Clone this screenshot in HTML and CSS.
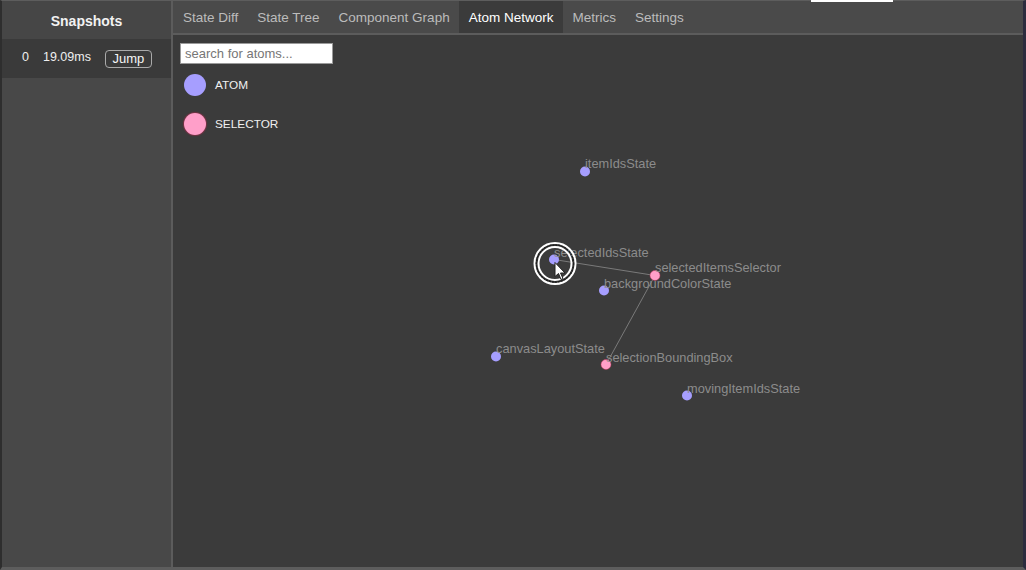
FILE: index.html
```html
<!DOCTYPE html>
<html>
<head>
<meta charset="utf-8">
<link rel="stylesheet" href="styles.css">
</head>
<body>
<div class="frame">
  <span class="top-mark"></span>
  <div class="app">
    <aside class="sidebar">
      <div class="sidebar-title">Snapshots</div>
      <div class="snapshot-row">
        <span class="snap-index">0</span>
        <span class="snap-time">19.09ms</span>
        <button class="jump">Jump</button>
      </div>
    </aside>
    <main class="main">
      <nav class="tabs">
        <div class="tab">State Diff</div>
        <div class="tab">State Tree</div>
        <div class="tab">Component Graph</div>
        <div class="tab active">Atom Network</div>
        <div class="tab">Metrics</div>
        <div class="tab">Settings</div>
      </nav>
      <section class="canvas">
        <svg class="graph" width="850" height="532" viewBox="0 0 850 532">
          <g transform="translate(-173,-34.5)">
            <line class="edge" x1="554" y1="259" x2="655" y2="275"/>
            <line class="edge" x1="655" y1="275" x2="606" y2="364"/>

            <circle class="atom" cx="585" cy="171" r="5"/>
            <text class="label" x="585" y="167.5">itemIdsState</text>

            <circle class="atom" cx="554" cy="259" r="5"/>
            <text class="label" x="554" y="256.5">selectedIdsState</text>

            <circle class="selector" cx="655" cy="275" r="5"/>
            <text class="label" x="655" y="271.5">selectedItemsSelector</text>

            <circle class="atom" cx="604" cy="290" r="5"/>
            <text class="label" x="604" y="287.5">backgroundColorState</text>

            <circle class="atom" cx="496" cy="356" r="5"/>
            <text class="label" x="496" y="352.5">canvasLayoutState</text>

            <circle class="selector" cx="606" cy="364" r="5"/>
            <text class="label" x="606" y="361.5">selectionBoundingBox</text>

            <circle class="atom" cx="687" cy="395" r="5"/>
            <text class="label" x="687" y="392.5">movingItemIdsState</text>

            <g class="pointer">
              <circle cx="555" cy="263" r="20.5" fill="none" stroke="#ffffff" stroke-width="2"/>
              <circle cx="555" cy="263" r="18.5" fill="none" stroke="#1e1e1e" stroke-width="1.5" stroke-dasharray="2 1"/>
              <circle cx="555" cy="263" r="16.5" fill="none" stroke="#ffffff" stroke-width="2"/>
              <path d="M555 262 L555 276 L558.5 273 L561 279 L563 278 L560.5 272.5 L565 272.5 Z" fill="#ffffff" stroke="#222" stroke-width="1" stroke-linejoin="round"/>
            </g>
          </g>
        </svg>
        <input class="search" type="text" placeholder="search for atoms...">
        <div class="legend">
          <div class="legend-item"><span class="dot dot-atom"></span><span class="legend-text">ATOM</span></div>
          <div class="legend-item"><span class="dot dot-selector"></span><span class="legend-text">SELECTOR</span></div>
        </div>
      </section>
    </main>
  </div>
</div>
</body>
</html>
```

FILE: styles.css
```css
* { box-sizing: border-box; }

html, body {
  margin: 0;
  padding: 0;
  background: #3b3b3b;
}

body {
  font-family: "Liberation Sans", Arial, Helvetica, sans-serif;
  width: 1026px;
  height: 570px;
  overflow: hidden;
}

.frame {
  position: relative;
  width: 1026px;
  height: 570px;
  display: flex;
  flex-direction: column;
  border-top: 1px solid #5d5d5d;
  border-left: 2px solid #2e2e2e;
  border-right: 3px solid #2c2c3e;
  border-bottom: 3px solid #5d5d5d;
}

.top-mark {
  position: absolute;
  top: -1px;
  left: 809px;
  width: 82px;
  height: 2px;
  background: #ffffff;
}

.app {
  flex: 1;
  display: flex;
  min-height: 0;
}

.sidebar {
  width: 171px;
  background: #484848;
  border-right: 2px solid #5c5c5c;
  display: flex;
  flex-direction: column;
}

.sidebar-title {
  height: 38px;
  display: flex;
  align-items: center;
  justify-content: center;
  padding-top: 2px;
  font-weight: bold;
  font-size: 14px;
  color: #f2f2f2;
  background: #464646;
}

.snapshot-row {
  height: 39px;
  background: #3a3a3a;
  display: flex;
  align-items: center;
  gap: 14px;
  padding-left: 20px;
  color: #efefef;
  font-size: 12.5px;
}

.snap-time { margin-top: -3px; }
.snap-index { margin-top: -3px; }

.jump {
  font-family: "Liberation Sans", Arial, sans-serif;
  font-size: 13px;
  color: #f5f5f5;
  background: transparent;
  border: 1px solid #aaaaaa;
  border-radius: 4px;
  width: 47px;
  height: 18px;
  padding: 0;
  line-height: 16px;
  margin-top: 1px;
}

.main {
  flex: 1;
  display: flex;
  flex-direction: column;
  min-width: 0;
}

.tabs {
  height: 34px;
  background: #4a4a4a;
  border-bottom: 2px solid #5c5c5c;
  display: flex;
  align-items: stretch;
}

.tab {
  padding: 0 10px;
  display: flex;
  align-items: center;
  font-size: 13.5px;
  color: #bcbcbc;
  margin-right: -1px;
}

.tab.active {
  background: #3b3b3b;
  color: #ffffff;
}

.canvas {
  position: relative;
  flex: 1;
  background: #3b3b3b;
  padding: 8px 7px;
}

.graph {
  position: absolute;
  left: 0;
  top: 0;
}

.edge {
  stroke: #7a7a7a;
  stroke-width: 1;
}

.atom {
  fill: #a69eff;
}

.selector {
  fill: #ff9fc9;
  stroke: rgba(200, 50, 90, 0.45);
  stroke-width: 1;
}

.label {
  font-family: "Liberation Sans", Arial, sans-serif;
  font-size: 12.8px;
  fill: #8c8c8c;
}

.search {
  position: relative;
  display: block;
  width: 153px;
  height: 21px;
  border: 1px solid #9a9a9a;
  background: #ffffff;
  padding: 0 4px;
  font-family: "Liberation Sans", Arial, sans-serif;
  font-size: 13px;
  outline: none;
}

.search::placeholder {
  color: #767676;
}

.legend {
  position: relative;
  display: flex;
  flex-direction: column;
  margin-top: 1px;
  width: 140px;
}

.legend-item {
  height: 39px;
  display: flex;
  align-items: center;
  gap: 9px;
  padding-left: 4px;
}

.dot {
  width: 22px;
  height: 22px;
  border-radius: 50%;
  display: block;
}

.dot-atom { background: #a69eff; }

.dot-selector {
  background: #ff9fc9;
  box-shadow: 0 0 1px 1px rgba(190, 40, 80, 0.45);
}

.legend-text {
  font-size: 11.8px;
  color: #f0f0f0;
}
```
